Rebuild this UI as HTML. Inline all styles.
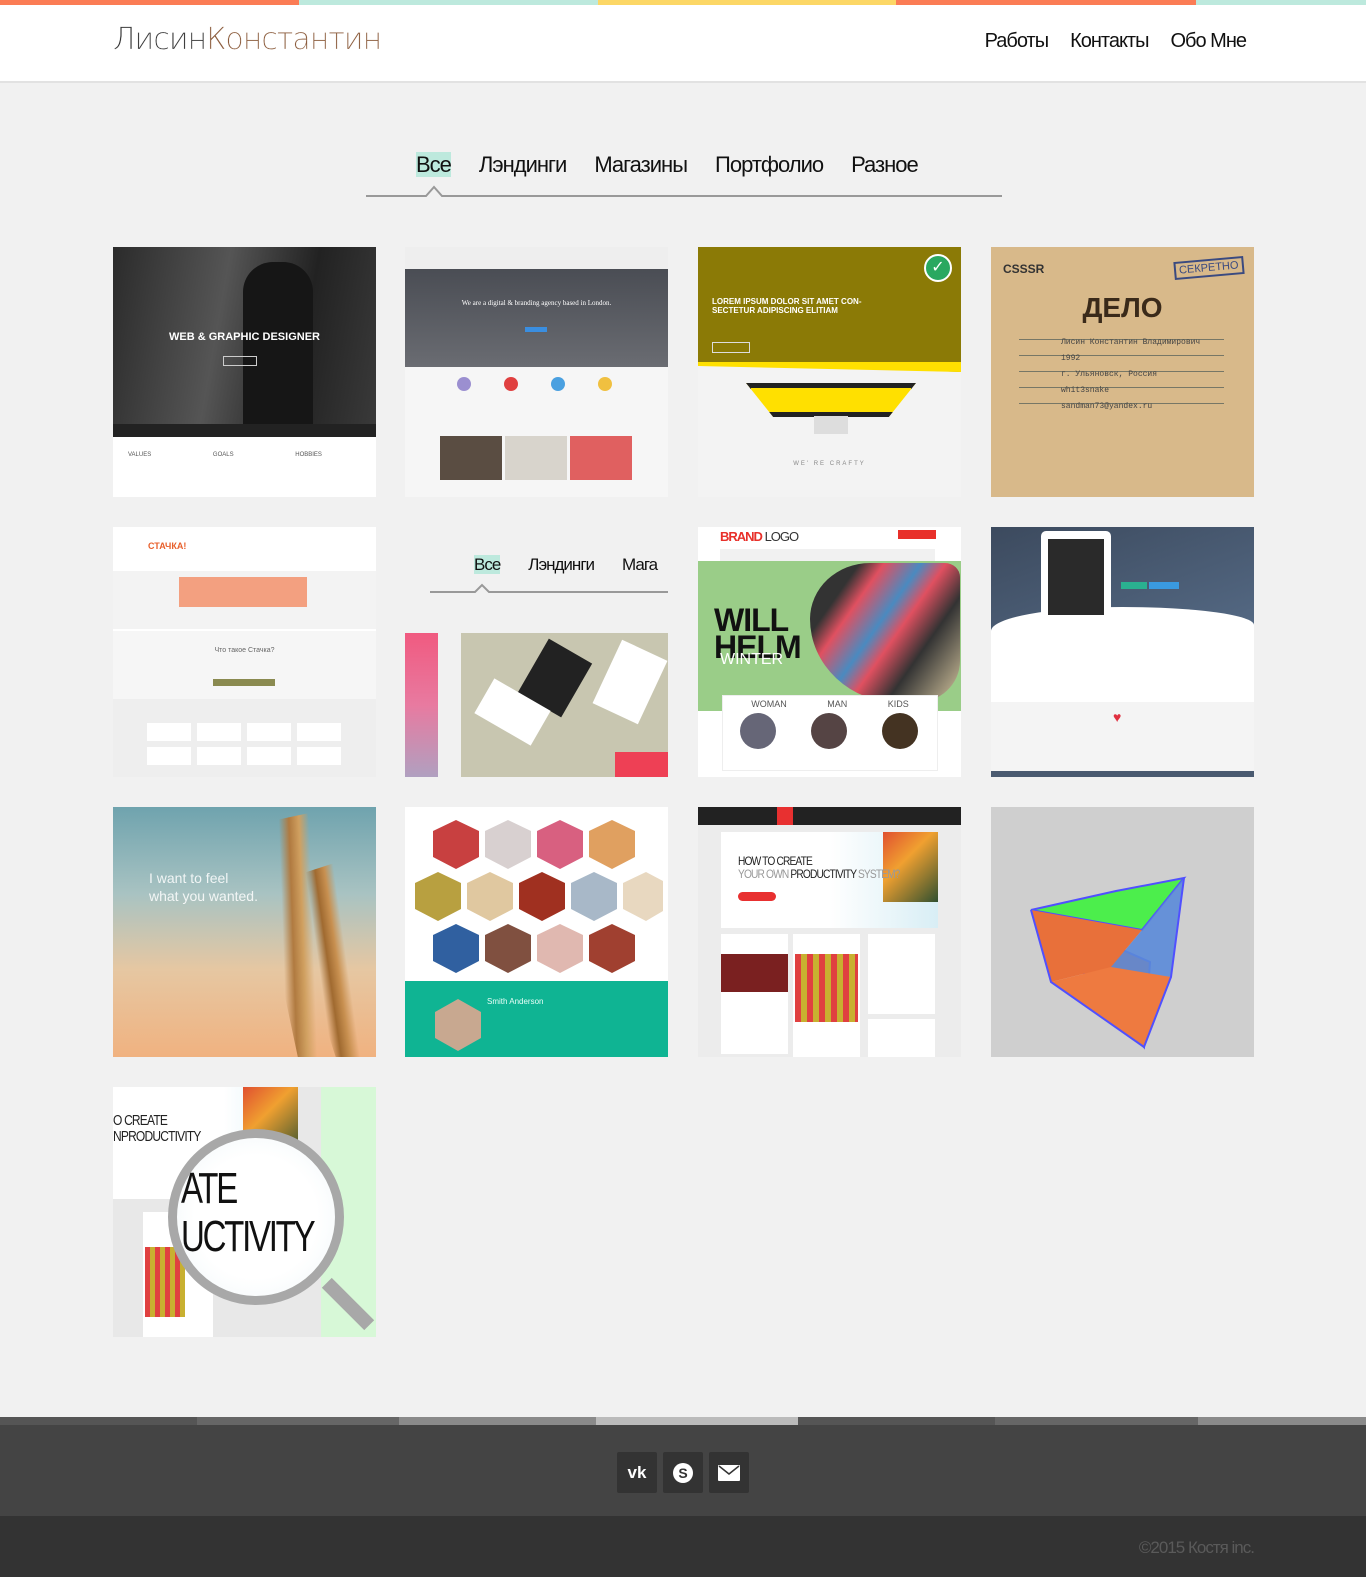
<!DOCTYPE html>
<html><head><meta charset="utf-8"><style>
*{margin:0;padding:0;box-sizing:border-box}
body{width:1366px;height:1577px;background:#f1f1f1;font-family:"Liberation Sans","DejaVu Sans",sans-serif;position:relative;overflow:hidden}
.a{position:absolute}
.t{position:absolute;width:263px;height:250px;overflow:hidden}
.nav a{color:#111;text-decoration:none;font-size:20px;margin-left:22px;letter-spacing:-1px}
.f span{margin:0 14px;font-size:22px;color:#111;letter-spacing:-1px}
.ic{position:absolute;top:1452px;width:40px;height:41px;background:#333;border-radius:2px;color:#fff;font-weight:bold;text-align:center;line-height:41px;font-size:18px}
</style></head><body>
<div class="a" style="top:0;left:0;width:299px;height:5px;background:#fb7c55"></div>
<div class="a" style="top:0;left:299px;width:299px;height:5px;background:#bde9dd"></div>
<div class="a" style="top:0;left:598px;width:298px;height:5px;background:#fcd766"></div>
<div class="a" style="top:0;left:896px;width:300px;height:5px;background:#fb7c55"></div>
<div class="a" style="top:0;left:1196px;width:170px;height:5px;background:#bde9dd"></div>
<div class="a" style="top:5px;left:0;width:1366px;height:78px;background:#fff;border-bottom:2px solid #e2e2e2"></div>
<div class="a" style="top:22px;left:113px;font-size:30px;font-weight:100;letter-spacing:-1px;font-family:'DejaVu Sans',sans-serif;-webkit-text-stroke:0.3px #fff"><span style="color:#333">Лисин</span><span style="color:#8a5a3a">Константин</span></div>
<div class="a nav" style="top:30px;right:120px"><a>Работы</a><a>Контакты</a><a>Обо Мне</a></div>
<div class="a f" style="top:152px;left:402px;white-space:nowrap"><span style="background:#bde9dd">Все</span><span>Лэндинги</span><span>Магазины</span><span>Портфолио</span><span>Разное</span></div>
<svg class="a" style="top:183px;left:366px" width="636" height="16"><path d="M0 13H60L68 4L76 13H636" stroke="#999" stroke-width="2" fill="none"/></svg>

<div class="t" style="left:113px;top:247px;background:#fff">
 <div class="a" style="top:0;left:0;width:263px;height:190px;background:linear-gradient(100deg,#2b2b2b,#555 40%,#222 70%,#3a3a3a)"></div>
 <div class="a" style="top:15px;left:130px;width:70px;height:170px;background:#161616;border-radius:30px 30px 0 0"></div>
 <div class="a" style="top:84px;left:0;width:263px;text-align:center;color:#fff;font-size:11px;font-weight:bold">WEB &amp; GRAPHIC DESIGNER</div>
 <div class="a" style="top:109px;left:110px;width:34px;height:10px;border:1px solid #ccc"></div>
 <div class="a" style="top:177px;left:0;width:263px;height:13px;background:#222"></div>
 <div class="a" style="top:205px;left:15px;font-size:6px;color:#555;word-spacing:60px">VALUES GOALS HOBBIES</div>
</div>
<div class="t" style="left:405px;top:247px;background:#f6f6f6">
 <div class="a" style="top:0;left:0;width:263px;height:22px;background:#eee"></div>
 <div class="a" style="top:22px;left:0;width:263px;height:98px;background:linear-gradient(#4a4d54,#6a6c72)"></div>
 <div class="a" style="top:52px;left:0;width:263px;text-align:center;color:#fff;font-size:7px;font-family:'Liberation Serif',serif">We are a digital &amp; branding agency based in London.</div>
 <div class="a" style="top:80px;left:120px;width:22px;height:5px;background:#3a8ee0"></div>
 <div class="a" style="top:130px;left:52px;width:14px;height:14px;border-radius:50%;background:#9b8fd0"></div>
 <div class="a" style="top:130px;left:99px;width:14px;height:14px;border-radius:50%;background:#e04040"></div>
 <div class="a" style="top:130px;left:146px;width:14px;height:14px;border-radius:50%;background:#4aa0e0"></div>
 <div class="a" style="top:130px;left:193px;width:14px;height:14px;border-radius:50%;background:#f0c040"></div>
 <div class="a" style="top:189px;left:35px;width:62px;height:44px;background:#5a4d42"></div>
 <div class="a" style="top:189px;left:100px;width:62px;height:44px;background:#d8d4cc"></div>
 <div class="a" style="top:189px;left:165px;width:62px;height:44px;background:#e06060"></div>
</div>
<div class="t" style="left:698px;top:247px;background:#f3f3f3">
 <div class="a" style="top:0;left:0;width:263px;height:125px;background:#8b7a06;clip-path:polygon(0 0,100% 0,100% 100%,0 92%)"></div>
 <div class="a" style="top:115px;left:0;width:263px;height:10px;background:#ffe000;clip-path:polygon(0 0,100% 0,100% 100%,0 40%)"></div>
 <div class="a" style="top:7px;left:226px;width:28px;height:28px;border-radius:50%;background:#2aa860;border:2px solid #fff;color:#fff;text-align:center;line-height:24px;font-size:16px">✓</div>
 <div class="a" style="top:50px;left:14px;color:#fff;font-size:8px;font-weight:bold;line-height:9px">LOREM IPSUM DOLOR SIT AMET CON-<br>SECTETUR ADIPISCING ELITIAM</div>
 <div class="a" style="top:95px;left:14px;width:38px;height:11px;border:1px solid #ddd"></div>
 <div class="a" style="top:136px;left:48px;width:170px;height:34px;background:#ffe000;border:5px solid #222;clip-path:polygon(0 0,100% 0,84% 100%,16% 100%)"></div>
 <div class="a" style="top:169px;left:116px;width:34px;height:18px;background:#ddd"></div>
 <div class="a" style="top:214px;left:0;width:263px;text-align:center;font-size:6px;color:#888;letter-spacing:2px">WE' RE CRAFTY</div>
</div>
<div class="t" style="left:991px;top:247px;background:#d8b98a">
 <div class="a" style="top:15px;left:12px;font-size:12px;font-weight:bold;color:#333">CSSSR</div>
 <div class="a" style="top:12px;left:183px;font-size:11px;color:#3a4a80;border:2px solid #3a4a80;padding:1px 3px;transform:rotate(-5deg)">СЕКРЕТНО</div>
 <div class="a" style="top:45px;left:0;width:263px;text-align:center;font-size:28px;font-weight:bold;color:#3a2a1a">ДЕЛО</div>
 <div class="a" style="top:92px;left:28px;width:205px;height:1px;border-top:1px solid #776;box-shadow:0 16px 0 #776,0 32px 0 #776,0 48px 0 #776,0 64px 0 #776"></div>
 <div class="a" style="top:88px;left:70px;font-size:8px;color:#444;font-family:'Liberation Mono',monospace;line-height:16px">Лисин Константин Владимирович<br>1992<br>г. Ульяновск, Россия<br>whit3snake<br>sandman73@yandex.ru</div>
</div>

<div class="t" style="left:113px;top:527px;background:#f6f6f6">
 <div class="a" style="top:0;left:0;width:263px;height:104px;background:#fff"></div>
 <div class="a" style="top:14px;left:35px;color:#e8602c;font-size:9px;font-weight:bold">СТАЧКА!</div>
 <div class="a" style="top:44px;left:0;width:263px;height:58px;background:#f3f3f3"></div>
 <div class="a" style="top:50px;left:66px;width:128px;height:30px;background:#f3a080"></div>
 <div class="a" style="top:120px;left:0;width:263px;text-align:center;font-size:7px;color:#666">Что такое Стачка?</div>
 <div class="a" style="top:152px;left:100px;width:62px;height:7px;background:#8a8a50"></div>
 <div class="a" style="top:172px;left:0;width:263px;height:78px;background:#eee"></div>
 <div class="a" style="top:196px;left:34px;width:200px;height:18px;background:repeating-linear-gradient(90deg,#fff 0 44px,transparent 44px 50px)"></div>
 <div class="a" style="top:220px;left:34px;width:200px;height:18px;background:repeating-linear-gradient(90deg,#fff 0 44px,transparent 44px 50px)"></div>
</div>
<div class="t" style="left:405px;top:527px;background:#f1f1f1">
 <div class="a f" style="top:28px;left:55px;white-space:nowrap;font-size:0"><span style="background:#bde9dd;font-size:17px">Все</span><span style="font-size:17px">Лэндинги</span><span style="font-size:17px">Мага</span></div>
 <svg class="a" style="top:55px;left:25px" width="240" height="12"><path d="M0 10H45L52 3L59 10H240" stroke="#999" stroke-width="2" fill="none"/></svg>
 <div class="a" style="top:106px;left:0;width:33px;height:144px;background:linear-gradient(#f05a80,#e87aa0,#b0a0c0)"></div>
 <div class="a" style="top:106px;left:56px;width:207px;height:144px;background:#c8c6b0"></div>
 <div class="a" style="top:120px;left:125px;width:50px;height:62px;background:#222;transform:rotate(30deg)"></div>
 <div class="a" style="top:165px;left:75px;width:65px;height:40px;background:#fff;transform:rotate(30deg)"></div>
 <div class="a" style="top:120px;left:200px;width:50px;height:70px;background:#fff;transform:rotate(25deg)"></div>
 <div class="a" style="top:225px;left:210px;width:53px;height:25px;background:#ee4055"></div>
</div>
<div class="t" style="left:698px;top:527px;background:#fff">
 <div class="a" style="top:2px;left:22px;font-size:13px;font-weight:bold;color:#e8302a;letter-spacing:-1px">BRAND <span style="color:#333;font-weight:normal">LOGO</span></div>
 <div class="a" style="top:3px;left:200px;width:38px;height:9px;background:#e8302a"></div>
 <div class="a" style="top:22px;left:22px;width:215px;height:12px;background:#f1f1f1"></div>
 <div class="a" style="top:34px;left:0;width:263px;height:150px;background:#9acd88"></div>
 <div class="a" style="top:80px;left:16px;font-size:32px;font-weight:900;color:#111;line-height:27px;letter-spacing:-1px">WILL<br>HELM</div>
 <div class="a" style="top:124px;left:22px;font-size:16px;color:#fff">WINTER</div>
 <div class="a" style="top:36px;left:112px;width:150px;height:140px;background:linear-gradient(125deg,#333 20%,#e05060 30%,#4a8ac0 45%,#e05060 55%,#333 70%,#d8c8a0);border-radius:40% 10% 30% 60%"></div>
 <div class="a" style="top:168px;left:24px;width:216px;height:76px;background:#fff;border:1px solid #eee"></div>
 <div class="a" style="top:172px;left:24px;width:216px;font-size:9px;color:#555;word-spacing:38px;text-align:center">WOMAN MAN KIDS</div>
 <div class="a" style="top:186px;left:42px;width:36px;height:36px;border-radius:50%;background:#667"></div>
 <div class="a" style="top:186px;left:113px;width:36px;height:36px;border-radius:50%;background:#544"></div>
 <div class="a" style="top:186px;left:184px;width:36px;height:36px;border-radius:50%;background:#432"></div>
</div>
<div class="t" style="left:991px;top:527px;background:#fff">
 <div class="a" style="top:0;left:0;width:263px;height:110px;background:linear-gradient(160deg,#3c4a5e,#556a85)"></div>
 <div class="a" style="top:80px;left:0;width:263px;height:60px;background:#fff;border-radius:50% 50% 0 0/40% 30% 0 0"></div>
 <div class="a" style="top:4px;left:50px;width:70px;height:92px;background:#fff;border-radius:5px"></div>
 <div class="a" style="top:12px;left:57px;width:56px;height:76px;background:#2a2a2a"></div>
 <div class="a" style="top:55px;left:130px;width:26px;height:7px;background:#2ab090"></div>
 <div class="a" style="top:55px;left:158px;width:30px;height:7px;background:#3a9ae0"></div>
 <div class="a" style="top:175px;left:0;width:263px;height:75px;background:#f4f4f4"></div>
 <div class="a" style="top:244px;left:0;width:263px;height:6px;background:#4a5a70"></div>
 <div class="a" style="top:182px;left:122px;color:#e03040;font-size:14px">♥</div>
</div>

<div class="t" style="left:113px;top:807px;background:linear-gradient(#6fa3ae,#a9c3c2 35%,#e6c7a2 65%,#f0b280)">
 <div class="a" style="top:62px;left:36px;color:#fff;font-size:14px;font-weight:300;line-height:18px;opacity:.85">I want to feel<br>what you wanted.</div>
 <div class="a" style="top:10px;left:160px;width:60px;height:240px;background:linear-gradient(100deg,transparent 30%,#b07a40 40%,#d0a060 50%,transparent 60%);transform:rotate(-12deg)"></div>
 <div class="a" style="top:60px;left:195px;width:60px;height:200px;background:linear-gradient(100deg,transparent 30%,#a06a30 40%,#c89050 50%,transparent 60%);transform:rotate(-18deg)"></div>
</div>
<div class="t" style="left:405px;top:807px;background:#fff">
 <svg class="a" style="top:10px;left:6px" width="252" height="160">
   <polygon points="45,3 68,14 68,40 45,52 22,40 22,14" fill="#c84040"/>
   <polygon points="97,3 120,14 120,40 97,52 74,40 74,14" fill="#d8d0d0"/>
   <polygon points="149,3 172,14 172,40 149,52 126,40 126,14" fill="#d86080"/>
   <polygon points="201,3 224,14 224,40 201,52 178,40 178,14" fill="#e0a060"/>
   <polygon points="27,55 50,66 50,92 27,104 4,92 4,66" fill="#b8a040"/>
   <polygon points="79,55 102,66 102,92 79,104 56,92 56,66" fill="#e0c8a0"/>
   <polygon points="131,55 154,66 154,92 131,104 108,92 108,66" fill="#a03020"/>
   <polygon points="183,55 206,66 206,92 183,104 160,92 160,66" fill="#a8b8c8"/>
   <polygon points="235,55 252,64 252,94 235,104 212,92 212,66" fill="#e8d8c0"/>
   <polygon points="45,107 68,118 68,144 45,156 22,144 22,118" fill="#3060a0"/>
   <polygon points="97,107 120,118 120,144 97,156 74,144 74,118" fill="#805040"/>
   <polygon points="149,107 172,118 172,144 149,156 126,144 126,118" fill="#e0b8b0"/>
   <polygon points="201,107 224,118 224,144 201,156 178,144 178,118" fill="#a04030"/>
 </svg>
 <div class="a" style="top:174px;left:0;width:263px;height:76px;background:#0fb493"></div>
 <div class="a" style="top:192px;left:30px;width:46px;height:52px;background:#c8a890;clip-path:polygon(50% 0,100% 25%,100% 75%,50% 100%,0 75%,0 25%)"></div>
 <div class="a" style="top:190px;left:82px;color:#e8fff8;font-size:8px">Smith Anderson</div>
</div>
<div class="t" style="left:698px;top:807px;background:#ececec">
 <div class="a" style="top:0;left:0;width:263px;height:18px;background:#222"></div>
 <div class="a" style="top:0;left:79px;width:16px;height:18px;background:#e83030"></div>
 <div class="a" style="top:25px;left:23px;width:217px;height:96px;background:linear-gradient(90deg,#fff 50%,#d8eef5)"></div>
 <div class="a" style="top:25px;left:185px;width:55px;height:70px;background:linear-gradient(135deg,#e05030,#f0a030 40%,#305030)"></div>
 <div class="a" style="top:48px;left:40px;font-size:12px;color:#222;line-height:13px;letter-spacing:-1px;transform:scaleX(.85);transform-origin:left">HOW TO CREATE<br><span style="color:#999">YOUR OWN</span> PRODUCTIVITY <span style="color:#999">SYSTEM?</span></div>
 <div class="a" style="top:85px;left:40px;width:38px;height:9px;border-radius:5px;background:#e83030"></div>
 <div class="a" style="top:127px;left:23px;width:67px;height:120px;background:#fff"></div>
 <div class="a" style="top:147px;left:23px;width:67px;height:38px;background:#7a2020"></div>
 <div class="a" style="top:127px;left:95px;width:67px;height:123px;background:#fff"></div>
 <div class="a" style="top:147px;left:97px;width:63px;height:68px;background:repeating-linear-gradient(90deg,#e04040 0 6px,#c8b030 6px 12px)"></div>
 <div class="a" style="top:127px;left:170px;width:67px;height:80px;background:#fff"></div>
 <div class="a" style="top:212px;left:170px;width:67px;height:38px;background:#fff"></div>
</div>
<div class="t" style="left:991px;top:807px;background:#cfcfcf">
 <svg class="a" style="top:0;left:0" width="263" height="250">
  <polygon points="40,103 159,155 153,240" fill="#e8703a" stroke="#5050ff" stroke-width="2"/>
  <polygon points="40,103 125,84 193,71 151,123" fill="#4cee4c" stroke="#5050ff" stroke-width="2"/>
  <polygon points="40,103 151,123 120,160 60,175" fill="#e8703a"/>
  <polygon points="151,123 193,71 180,170 153,240 120,160" fill="#5a8ad8" opacity=".9"/>
  <polygon points="120,160 180,170 153,240 60,175" fill="#ee7a40"/>
  <polyline points="40,103 60,175 153,240 180,170 193,71" fill="none" stroke="#5050ff" stroke-width="2"/>
 </svg>
</div>

<div class="t" style="left:113px;top:1087px;background:#e8e8e8">
 <div class="a" style="top:0;left:0;width:185px;height:112px;background:linear-gradient(90deg,#fff 60%,#d8eef5)"></div>
 <div class="a" style="top:0;left:130px;width:55px;height:70px;background:linear-gradient(135deg,#e05030,#f0a030 40%,#305030)"></div>
 <div class="a" style="top:0;left:208px;width:55px;height:250px;background:#d7f8d7"></div>
 <div class="a" style="top:26px;left:0;font-size:15px;line-height:16px;color:#222;letter-spacing:-1px;transform:scaleX(.8);transform-origin:left">O CREATE<br>NPRODUCTIVITY</div>
 <div class="a" style="top:125px;left:30px;width:70px;height:125px;background:#fff"></div>
 <div class="a" style="top:160px;left:32px;width:40px;height:70px;background:repeating-linear-gradient(90deg,#e04040 0 5px,#c8b030 5px 10px)"></div>
 <div class="a" style="top:42px;left:55px;width:176px;height:176px;border-radius:50%;background:radial-gradient(#fff 55%,#eef6f8);border:9px solid #a8a8a8"></div>
 <div class="a" style="top:210px;left:205px;width:60px;height:14px;background:#a8a8a8;transform:rotate(45deg)"></div>
 <div class="a" style="top:78px;left:68px;font-size:44px;line-height:48px;color:#111;letter-spacing:-3px;transform:scaleX(.75);transform-origin:left;white-space:nowrap">ATE<br>UCTIVITY</div>
</div>

<div class="a" style="top:1417px;left:0;width:1366px;height:8px;background:linear-gradient(90deg,#555 0 197px,#666 197px 399px,#8a8a8a 399px 596px,#bbb 596px 798px,#555 798px 995px,#666 995px 1198px,#8a8a8a 1198px)"></div>
<div class="a" style="top:1425px;left:0;width:1366px;height:91px;background:#444"></div>
<div class="a" style="top:1516px;left:0;width:1366px;height:61px;background:#333"></div>
<div class="ic" style="left:617px;font-size:17px">vk</div>
<div class="ic" style="left:663px"><span style="display:inline-block;width:20px;height:20px;border-radius:50%;background:#fff;color:#333;line-height:20px;font-size:14px;vertical-align:middle">S</span></div>
<div class="ic" style="left:709px"><svg width="22" height="16" style="vertical-align:middle"><rect width="22" height="16" rx="1" fill="#fff"/><path d="M1 1L11 9L21 1" stroke="#333" stroke-width="1.5" fill="none"/></svg></div>
<div class="a" style="top:1538px;right:112px;color:#5a5a5a;font-size:17px;letter-spacing:-1px">©2015 Костя inc.</div>
</body></html>
